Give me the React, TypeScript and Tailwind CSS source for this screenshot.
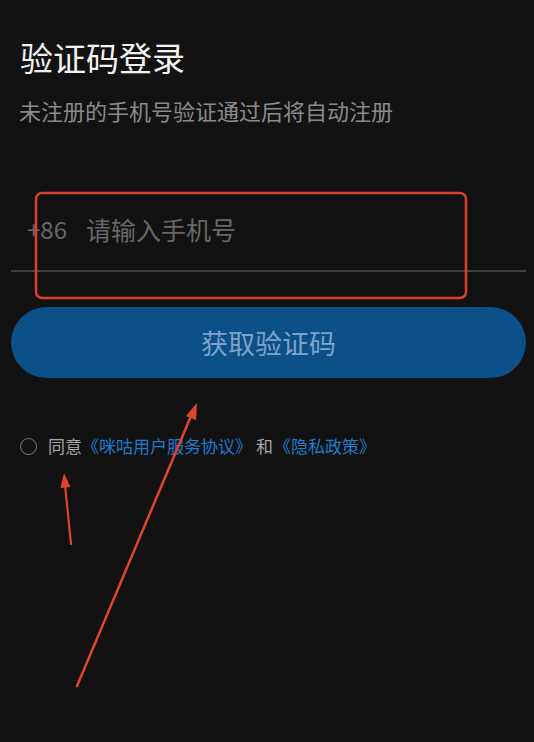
import React from "react";

export default function App() {
  return (
    <div className="relative w-[534px] h-[742px] overflow-hidden bg-[#121212] font-['Noto_Sans_CJK_SC','Noto_Sans',sans-serif]">
      <div className="pl-5 pt-[41px] text-[33px] leading-[33px] text-[#f2f2f2]">验证码登录</div>
      <div className="pl-[19px] mt-[25px] text-[22px] leading-[22px] text-[#8a8a8a]">未注册的手机号验证通过后将自动注册</div>

      <div className="ml-[11px] mr-[8px] mt-[94px] pb-[27px] border-b-2 border-[#3e3e3e]">
        <div className="flex h-[28px] items-center pl-4 text-[#676767]">
          <span className="text-[24px] leading-[28px]">+86</span>
          <span className="ml-[19px] text-[25px] leading-[28px]">请输入手机号</span>
        </div>
      </div>

      <div className="ml-[11px] mr-[8px] mt-[35px] flex h-[71px] items-center justify-center rounded-full bg-[#0b5088]">
        <span className="text-[27px] leading-[30px] text-[#7ea3c6]">获取验证码</span>
      </div>

      <div className="mt-[58px] flex h-[20px] items-center pl-5">
        <span className="h-[17px] w-[17px] rounded-full border-[1.5px] border-[#7a7a7a]" />
        <span className="ml-[11px] flex items-center text-[17px] leading-[20px] text-[#a6a6a6]">
          <span>同意</span>
          <span className="text-[#1b7bd0]">《咪咕用户服务协议》</span>
          <span className="ml-[4px]">和</span>
          <span className="ml-[1px] text-[#1b7bd0]">《隐私政策》</span>
        </span>
      </div>

      <svg className="pointer-events-none absolute inset-0" width="534" height="742" viewBox="0 0 534 742">
        <rect x="36" y="193" width="430" height="105" rx="6" fill="none" stroke="#d9412c" strokeWidth="2.5" />
        <line x1="71" y1="544" x2="65" y2="485" stroke="#e0442e" strokeWidth="2.2" strokeLinecap="round" />
        <polygon points="64,473 70.4,487 60.4,488" fill="#e0442e" />
        <line x1="77" y1="686" x2="191" y2="416" stroke="#e0442e" strokeWidth="2.5" strokeLinecap="round" />
        <polygon points="197,403 196,420 186,416" fill="#e0442e" />
      </svg>
    </div>
  );
}
